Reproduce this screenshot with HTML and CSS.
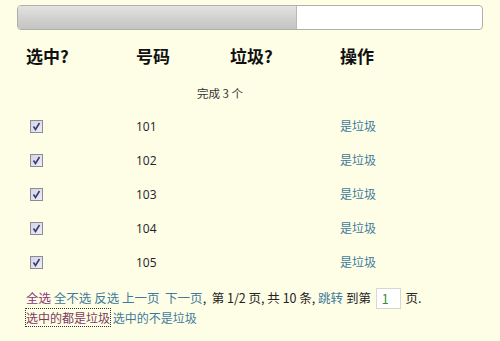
FILE: index.html
```html
<!DOCTYPE html>
<html lang="zh">
<head>
<meta charset="utf-8">
<link rel="stylesheet" href="styles.css">
</head>
<body>
<div class="page">
  <div class="progress"><div class="fill" style="width:60%"></div></div>
  <div class="grid head">
    <div>选中?</div><div>号码</div><div>垃圾?</div><div>操作</div>
  </div>
  <div class="status">完成 3 个</div>
  <div class="grid row"><div><span class="cb"><svg viewBox="0 0 13 13" width="13" height="13"><path d="M3.5 6.5 L5.5 9.5 L9.5 3" fill="none" stroke="#3a3a7a" stroke-width="1.6"/></svg></span></div><div>101</div><div></div><div><a class="link">是垃圾</a></div></div>
  <div class="grid row"><div><span class="cb"><svg viewBox="0 0 13 13" width="13" height="13"><path d="M3.5 6.5 L5.5 9.5 L9.5 3" fill="none" stroke="#3a3a7a" stroke-width="1.6"/></svg></span></div><div>102</div><div></div><div><a class="link">是垃圾</a></div></div>
  <div class="grid row"><div><span class="cb"><svg viewBox="0 0 13 13" width="13" height="13"><path d="M3.5 6.5 L5.5 9.5 L9.5 3" fill="none" stroke="#3a3a7a" stroke-width="1.6"/></svg></span></div><div>103</div><div></div><div><a class="link">是垃圾</a></div></div>
  <div class="grid row"><div><span class="cb"><svg viewBox="0 0 13 13" width="13" height="13"><path d="M3.5 6.5 L5.5 9.5 L9.5 3" fill="none" stroke="#3a3a7a" stroke-width="1.6"/></svg></span></div><div>104</div><div></div><div><a class="link">是垃圾</a></div></div>
  <div class="grid row"><div><span class="cb"><svg viewBox="0 0 13 13" width="13" height="13"><path d="M3.5 6.5 L5.5 9.5 L9.5 3" fill="none" stroke="#3a3a7a" stroke-width="1.6"/></svg></span></div><div>105</div><div></div><div><a class="link">是垃圾</a></div></div>
  <div class="footer">
    <div class="line1"><a class="visited">全选</a> <a class="link">全不选</a> <a class="link">反选</a> <a class="link">上一页</a>&nbsp;&nbsp;<a class="link">下一页</a>, &nbsp;第 1/2 页, 共 10 条, <a class="link">跳转</a> 到第 <span class="pageinput">1</span> 页.</div>
    <div class="line2"><a class="visited focus">选中的都是垃圾</a> <a class="link">选中的不是垃圾</a></div>
  </div>
</div>
</body>
</html>
```
FILE: styles.css
```css
html, body {
  margin: 0;
  padding: 0;
  background: #fefee6;
}
.page {
  width: 500px;
  height: 341px;
  box-sizing: border-box;
  padding: 5px 17px 0 17px;
  font-family: "Noto Sans CJK SC", "Noto Sans", sans-serif;
  color: #222;
}
.progress {
  width: 466px;
  height: 25px;
  box-sizing: border-box;
  border: 1px solid #b0b0a8;
  border-radius: 4px;
  background: #ffffff;
  overflow: hidden;
  display: flex;
}
.fill {
  height: 100%;
  background: linear-gradient(#e2e2e0, #cfcfcd 60%, #c4c4c2);
  border-right: 1px solid #b8b8b4;
}
.grid {
  display: grid;
  grid-template-columns: 110px 94px 110px 1fr;
  padding-left: 9px;
}
.head {
  margin-top: 12px;
  height: 26px;
  align-items: center;
  font-size: 17px;
  font-weight: bold;
  color: #111;
}
.status {
  margin-top: 14px;
  height: 22px;
  line-height: 22px;
  font-size: 11.5px;
  color: #333;
  padding-left: 180px;
}
.row {
  height: 34px;
  align-items: center;
  font-size: 12px;
  font-family: "Open Sans", "Noto Sans", sans-serif;
}
.status + .row { margin-top: 5px; }
.cb {
  display: block;
  width: 13px;
  height: 13px;
  margin-left: 4px;
  box-sizing: border-box;
  border: 1px solid #8c8c94;
  background: linear-gradient(135deg, #d4d4e4, #eeeef6);
  position: relative;
}
.cb svg {
  position: absolute;
  left: -1px;
  top: -1px;
}
.link {
  color: #3f7a9c;
  font-family: "Noto Sans CJK SC", sans-serif;
  font-size: 12px;
}
.line1 .link { font-size: 12.5px; }
.visited {
  color: #883a78;
}
.footer {
  margin-top: 7px;
  padding-left: 9px;
  font-size: 12.5px;
  font-family: "Noto Sans CJK SC", "Open Sans", sans-serif;
  color: #222;
}
.line1 {
  height: 23px;
  line-height: 23px;
  white-space: pre;
}
.line2 {
  height: 18px;
  line-height: 18px;
  white-space: pre;
  font-size: 12px;
}
.focus {
  outline: 1px dotted #333;
  color: #7a3a60;
}
.pageinput {
  display: inline-block;
  vertical-align: middle;
  width: 25px;
  height: 21px;
  box-sizing: border-box;
  border: 1px solid #d8d8d0;
  background: #fff;
  color: #3a8a3a;
  padding-left: 5px;
  line-height: 19px;
  margin: -2px 2px 0 2px;
}
```
